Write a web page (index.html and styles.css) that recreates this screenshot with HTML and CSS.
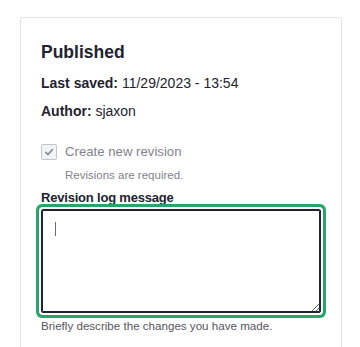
FILE: index.html
```html
<!DOCTYPE html>
<html lang="en">
<head>
<meta charset="utf-8">
<title>Revision</title>
<link rel="stylesheet" href="styles.css">
</head>
<body>
<div class="card">
  <h3 class="status">Published</h3>
  <p class="meta"><strong>Last saved:</strong> 11/29/2023 - 13:54</p>
  <p class="meta"><strong>Author:</strong> sjaxon</p>
  <div class="check-row">
    <span class="checkbox">
      <svg viewBox="0 0 16 16" width="16" height="16" aria-hidden="true"><path d="M4.2 8.3 L6.9 10.9 L11.9 5.2" fill="none" stroke="#85868f" stroke-width="1.9" stroke-linecap="round" stroke-linejoin="round"/></svg>
    </span>
    <label class="check-label">Create new revision</label>
  </div>
  <div class="check-desc">Revisions are required.</div>
  <label class="field-label" for="log">Revision log message</label>
  <div class="textarea-wrap">
    <textarea id="log" class="textarea" rows="4"></textarea>
    <span class="caret"></span>
  </div>
  <div class="field-desc">Briefly describe the changes you have made.</div>
</div>
</body>
</html>
```

FILE: styles.css
```css
html, body {
  margin: 0;
  background: #ffffff;
}
body {
  padding: 17px 18px 0 20px;
  font-family: "Liberation Sans", Arial, sans-serif;
  color: #222330;
  overflow: hidden;
}
.card {
  border: 1px solid #e4e5e9;
  border-radius: 2px;
  padding: 24px 20px 30px 20px;
  min-height: 400px;
}
.status {
  margin: 0 0 11px 0;
  font-size: 17.5px;
  line-height: 20px;
  font-weight: 700;
}
.meta {
  margin: 0 0 8px 0;
  font-size: 14px;
  line-height: 20px;
}
.meta strong {
  font-weight: 700;
}
.check-row {
  display: flex;
  align-items: center;
  gap: 8px;
  height: 20px;
  margin-top: 21px;
}
.checkbox {
  box-sizing: border-box;
  width: 16px;
  height: 16px;
  border: 1px solid #c4c5cb;
  border-radius: 2px;
  background: #f2f3f7;
  display: flex;
  align-items: center;
  justify-content: center;
}
.checkbox svg {
  display: block;
  width: 14px;
  height: 14px;
}
.check-label {
  font-size: 13.2px;
  line-height: 20px;
  color: #82838c;
}
.check-desc {
  margin: 5px 0 0 24px;
  font-size: 11.5px;
  line-height: 16px;
  color: #82838c;
}
.field-label {
  display: block;
  margin-top: 6px;
  font-size: 13px;
  line-height: 18px;
  font-weight: 700;
  letter-spacing: -0.2px;
}
.textarea-wrap {
  position: relative;
  margin-top: 2px;
}
.textarea {
  display: block;
  box-sizing: border-box;
  width: 100%;
  height: 104px;
  margin: 0;
  padding: 12px 13px;
  border: 1px solid #222330;
  border-radius: 2px;
  background: #ffffff;
  box-shadow: inset 0 0 0 1px #222330, 0 0 0 2px #ffffff, 0 0 0 5px #26a769;
  font-family: "Liberation Sans", Arial, sans-serif;
  font-size: 14px;
  outline: none;
  resize: vertical;
}
.caret {
  position: absolute;
  left: 14px;
  top: 13px;
  width: 1px;
  height: 14px;
  background: #6b6c74;
}
.field-desc {
  margin-top: 5px;
  font-size: 11.6px;
  line-height: 16px;
  color: #55565e;
}
```
